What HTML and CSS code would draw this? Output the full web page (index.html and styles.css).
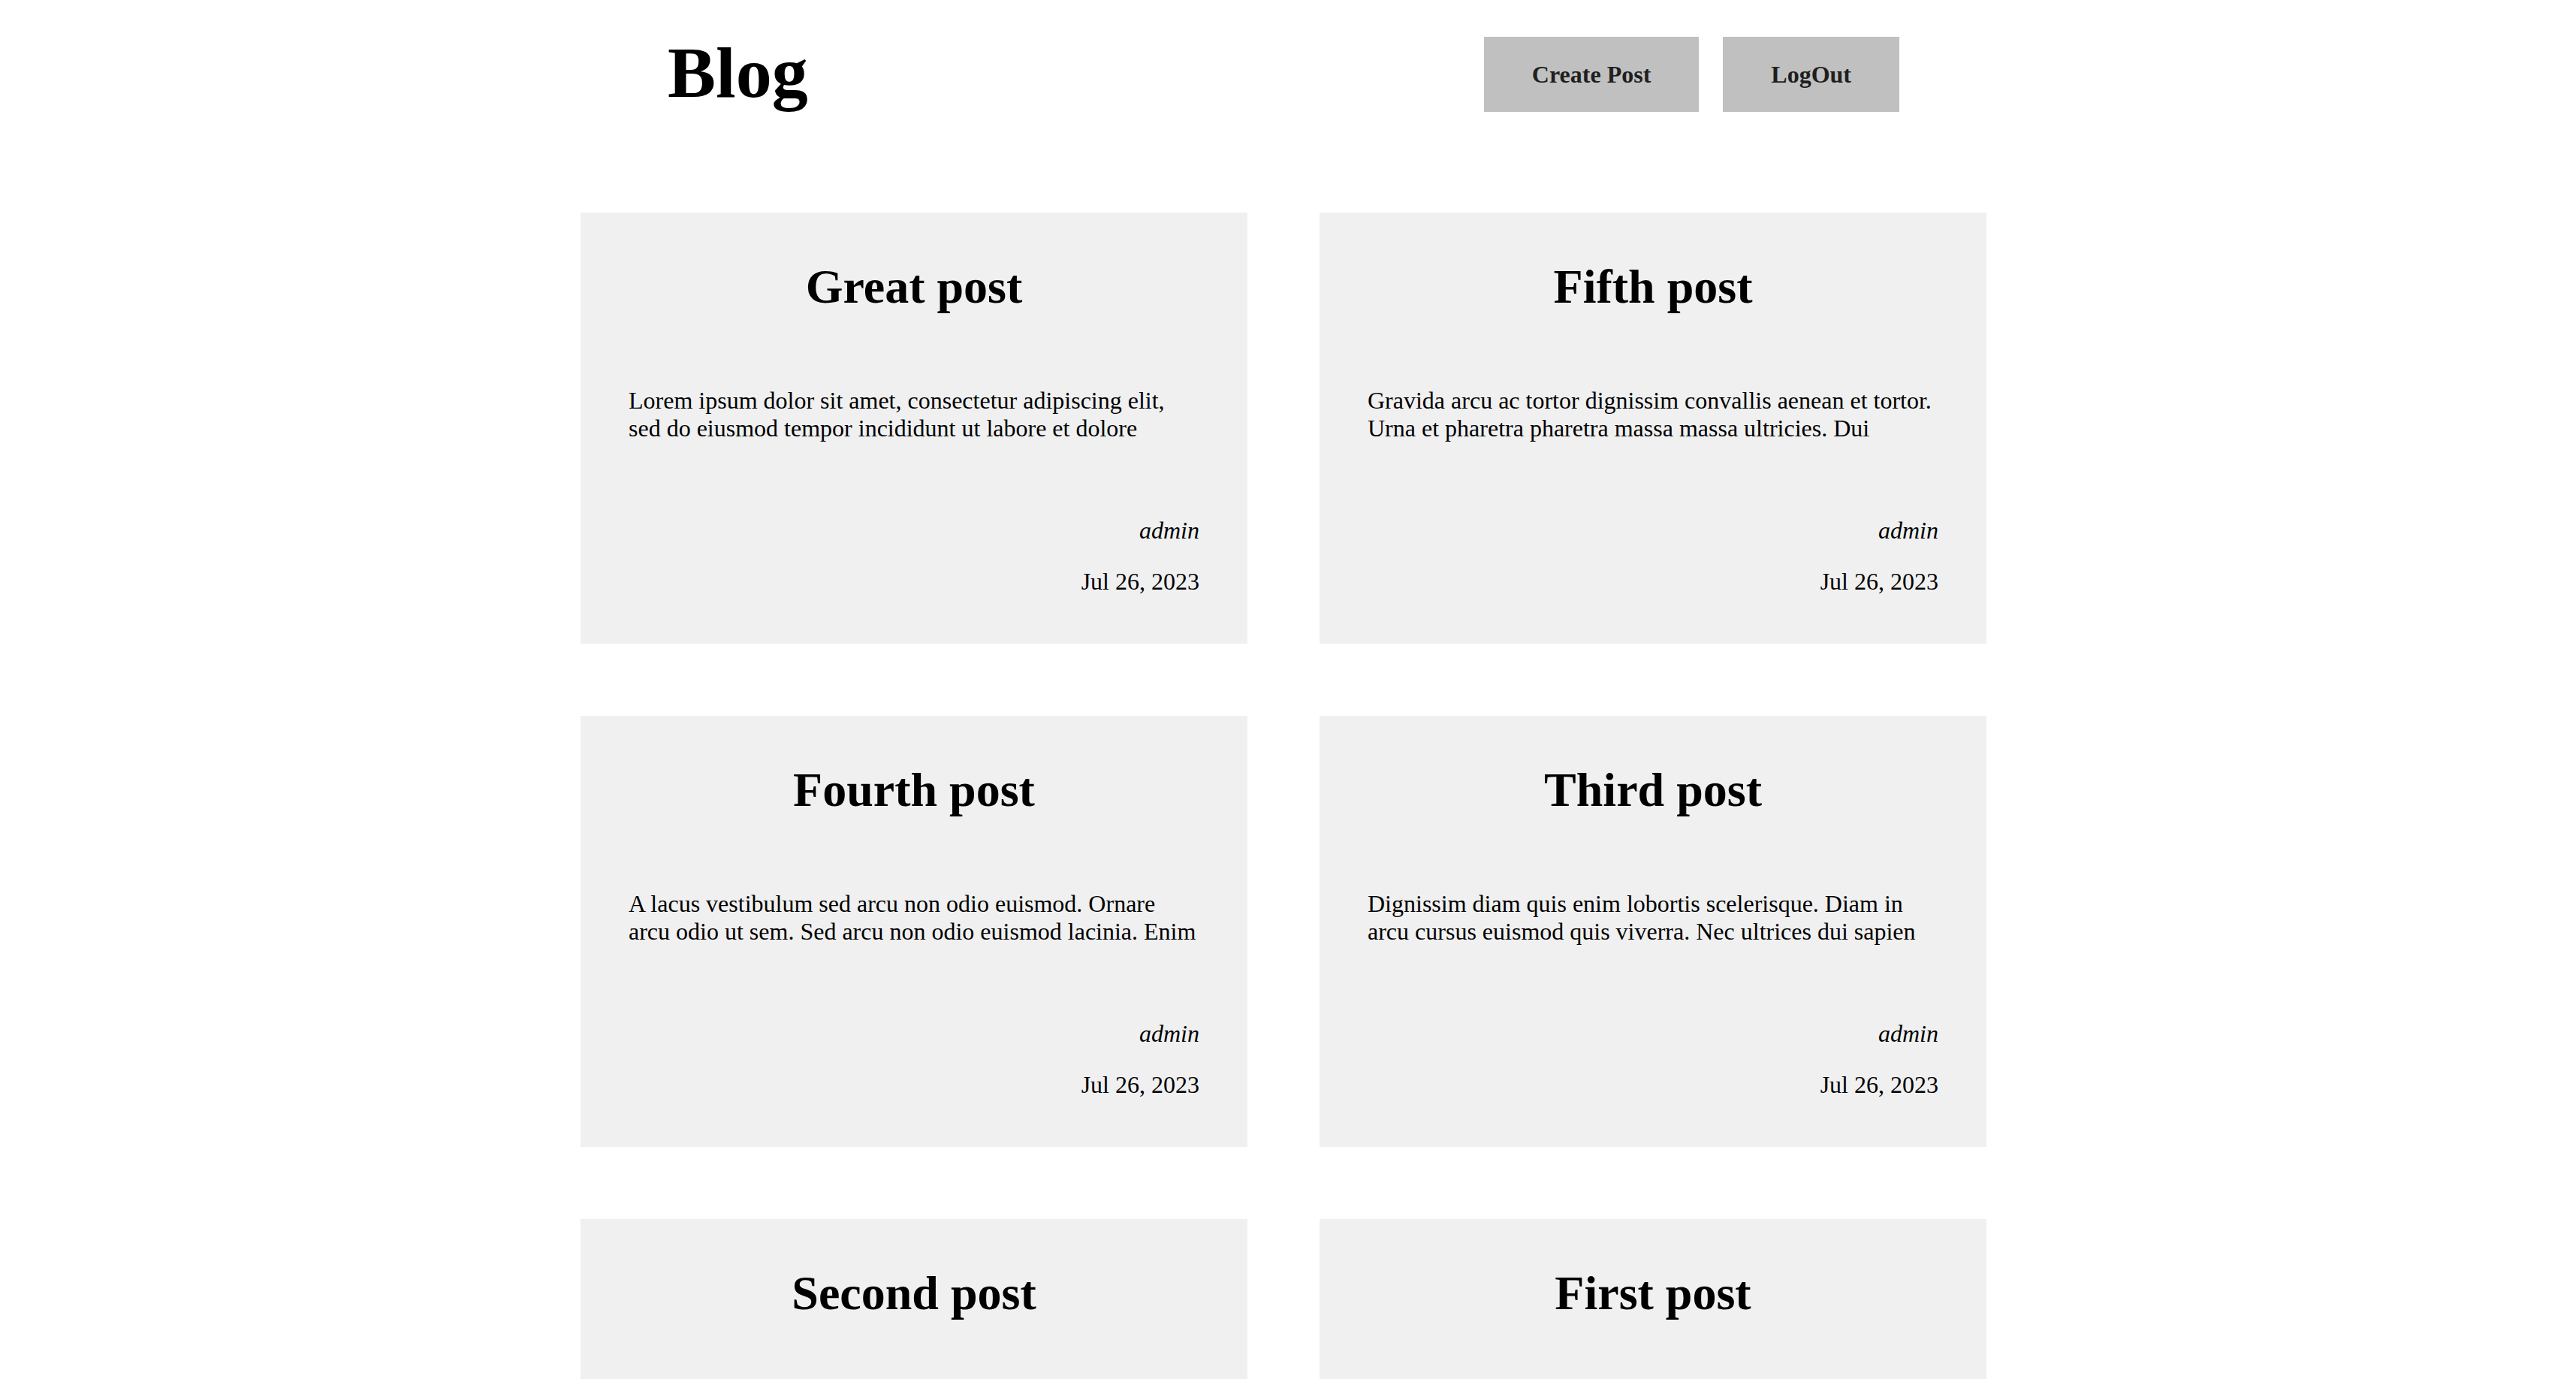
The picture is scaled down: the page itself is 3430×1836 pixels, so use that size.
FILE: index.html
```html
<!DOCTYPE html>
<html lang="en">
<head>
<meta charset="utf-8">
<title>Blog</title>
<link rel="stylesheet" href="styles.css">
</head>
<body>
<div class="page">
  <header class="header">
    <h1 class="logo">Blog</h1>
    <div class="actions">
      <button class="btn">Create Post</button>
      <button class="btn">LogOut</button>
    </div>
  </header>
  <main class="posts">
    <article class="card">
      <h2 class="card-title">Great post</h2>
      <p class="card-body">Lorem ipsum dolor sit amet, consectetur adipiscing elit, sed do eiusmod tempor incididunt ut labore et dolore</p>
      <div class="meta">
        <p class="author">admin</p>
        <p class="date">Jul 26, 2023</p>
      </div>
    </article>
    <article class="card">
      <h2 class="card-title">Fifth post</h2>
      <p class="card-body">Gravida arcu ac tortor dignissim convallis aenean et tortor. Urna et pharetra pharetra massa massa ultricies. Dui</p>
      <div class="meta">
        <p class="author">admin</p>
        <p class="date">Jul 26, 2023</p>
      </div>
    </article>
    <article class="card">
      <h2 class="card-title">Fourth post</h2>
      <p class="card-body">A lacus vestibulum sed arcu non odio euismod. Ornare arcu odio ut sem. Sed arcu non odio euismod lacinia. Enim</p>
      <div class="meta">
        <p class="author">admin</p>
        <p class="date">Jul 26, 2023</p>
      </div>
    </article>
    <article class="card">
      <h2 class="card-title">Third post</h2>
      <p class="card-body">Dignissim diam quis enim lobortis scelerisque. Diam in arcu cursus euismod quis viverra. Nec ultrices dui sapien</p>
      <div class="meta">
        <p class="author">admin</p>
        <p class="date">Jul 26, 2023</p>
      </div>
    </article>
    <article class="card">
      <h2 class="card-title">Second post</h2>
      <p class="card-body">Tellus in metus vulputate eu scelerisque felis imperdiet proin. Faucibus a pellentesque sit amet porttitor eget</p>
      <div class="meta">
        <p class="author">admin</p>
        <p class="date">Jul 26, 2023</p>
      </div>
    </article>
    <article class="card">
      <h2 class="card-title">First post</h2>
      <p class="card-body">Ut enim ad minim veniam, quis nostrud exercitation ullamco laboris nisi ut aliquip ex ea commodo consequat</p>
      <div class="meta">
        <p class="author">admin</p>
        <p class="date">Jul 26, 2023</p>
      </div>
    </article>
  </main>
</div>
</body>
</html>
```
FILE: styles.css
```css
html, body {
  margin: 0;
  padding: 0;
  background: #ffffff;
}

body {
  font-family: "Liberation Serif", "Times New Roman", serif;
  font-size: 32px;
  color: #000000;
}

.page {
  width: 1872px;
  margin-left: calc(50% - 942px);
  padding-bottom: 96px;
}

.header {
  display: flex;
  justify-content: space-between;
  align-items: flex-start;
  padding: 0 116px;
}

.logo {
  margin: 41px 0 0;
  font-size: 96px;
  font-weight: bold;
  line-height: normal;
}

.actions {
  display: flex;
  gap: 32px;
  margin-top: 49px;
}

.btn {
  display: flex;
  align-items: center;
  justify-content: center;
  box-sizing: border-box;
  height: 100px;
  padding: 0 64px;
  border: none;
  background: #c0c0c0;
  color: #1f1f1f;
  font-family: "Liberation Serif", "Times New Roman", serif;
  font-size: 32px;
  font-weight: bold;
  cursor: pointer;
}

.posts {
  display: grid;
  grid-template-columns: repeat(2, 888px);
  gap: 96px;
  margin-top: 131px;
}

.card {
  background: #f0f0f0;
  padding: 62px 64px 64px;
}

.card-title {
  margin: 0 0 96px;
  font-size: 64px;
  font-weight: bold;
  text-align: center;
  line-height: normal;
}

.card-body {
  margin: 0;
  line-height: normal;
}

.meta {
  margin-top: 99px;
  text-align: right;
}

.author {
  margin: 0 0 31px;
  font-style: italic;
}

.date {
  margin: 0;
}
```
